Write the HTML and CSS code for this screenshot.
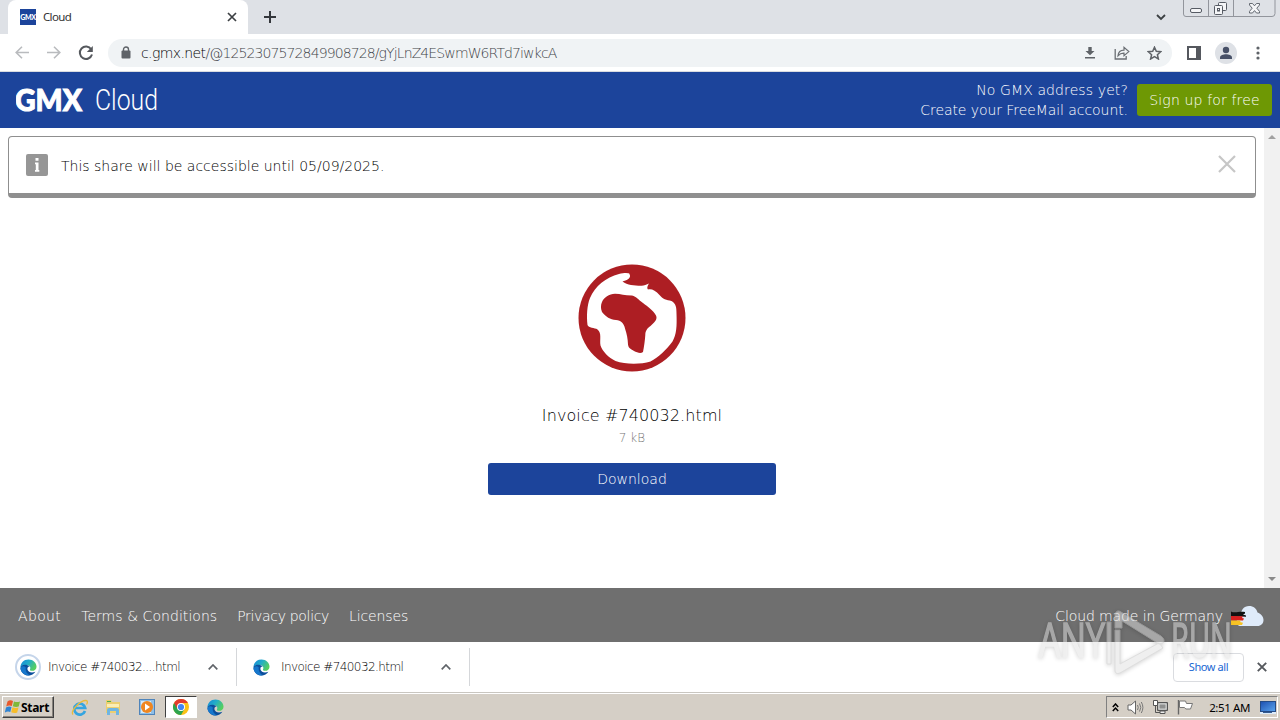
FILE: index.html
```html
<!DOCTYPE html>
<html lang="en">
<head>
<meta charset="utf-8">
<title>Cloud</title>
<link rel="stylesheet" href="styles.css">
</head>
<body>
<svg class="defs" width="0" height="0">
  <defs>
    <linearGradient id="edgeGreen" x1="0" y1="0" x2="1" y2="0.5">
      <stop offset="0" stop-color="#1687d8"/>
      <stop offset="0.5" stop-color="#22acc9"/>
      <stop offset="1" stop-color="#55cf60"/>
    </linearGradient>
    <linearGradient id="screenBlue" x1="0" y1="0" x2="1" y2="1">
      <stop offset="0" stop-color="#1c4fb0"/>
      <stop offset="1" stop-color="#5aa5ee"/>
    </linearGradient>
    <symbol id="edge" viewBox="0 0 18 18">
      <path d="M.5 9C.5 4 4 .5 9 .5c5 0 8.500 3.700 8.500 7.600 0 2.800-2.200 4.400-4.600 4.400-2 0-2.700-.8-2.300-1.500.9-1.600.1-4-2.600-4.300C5 6.300 2 6.500.5 9z" fill="url(#edgeGreen)"/>
      <path d="M.5 9.500C.4 7 4 5.200 8 6.500c1 .3 1.800.8 2.200 1.500-2 0-2.700 1.600-2.200 3.300.8 2.400 4 4 8.300 2.200C14.800 16 12 17.500 9 17.500 4.300 17.500.8 14 .5 9.500z" fill="#0b4f9c"/>
      <path d="M6.200 9c-.8 3 .8 6.600 4.500 8.300C6 18 1 14.500.5 10 2 7 4.500 7.500 6.200 9z" fill="#1677cc"/>
    </symbol>
  </defs>
</svg>

<div class="tabstrip">
  <div class="tab">
    <span class="favicon">GMX</span>
    <span class="tab-title">Cloud</span>
    <svg width="10" height="10" viewBox="0 0 10 10"><path d="M1 1l8 8M9 1L1 9" stroke="#3c4043" stroke-width="1.700"/></svg>
  </div>
  <svg class="newtab" width="12" height="12" viewBox="0 0 12 12"><path d="M6 0v12M0 6h12" stroke="#34373c" stroke-width="2"/></svg>
  <svg class="tabsearch" width="10" height="7" viewBox="0 0 10 7"><path d="M1 1l4 4 4-4" fill="none" stroke="#3c4043" stroke-width="1.800"/></svg>
  <svg class="winbtns" width="94" height="18" viewBox="0 0 94 18">
    <path d="M.5 0v14q0 2.500 2.500 2.500h86q3 0 3-3V0M25.500 0v16.500M50.500 0v16.500" fill="none" stroke="#92959c"/>
    <g fill="#f4f5f7" stroke="#565b64">
      <rect x="7.500" y="8.500" width="11" height="4" rx="1.500"/>
      <rect x="35.500" y="2.500" width="8" height="8" rx="1"/>
      <rect x="31.500" y="5.500" width="8" height="9" rx="1"/>
      <rect x="34.500" y="8.500" width="2" height="2.500"/>
      <path d="M66.500 3.500h3l2 2.300 2-2.300h3v1.500l-2.700 3.200 2.700 3.200v1.600h-3l-2-2.400-2 2.400h-3v-1.600l2.700-3.200-2.700-3.200z" stroke-width=".9"/>
    </g>
  </svg>
</div>

<div class="toolbar">
  <svg class="nav" width="14" height="13" viewBox="0 0 14 13"><path d="M7 .8L1.200 6.500 7 12.200M1.200 6.500H14" fill="none" stroke="#b9bbbe" stroke-width="1.600"/></svg>
  <svg class="nav" width="14" height="13" viewBox="0 0 14 13"><path d="M7 .8l5.800 5.700L7 12.200M12.800 6.500H0" fill="none" stroke="#b9bbbe" stroke-width="1.600"/></svg>
  <svg class="nav" width="16" height="16" viewBox="0 0 16 16"><path d="M13.200 4.200A6.200 6.200 0 1 0 14 9.500" fill="none" stroke="#55585d" stroke-width="2"/><path d="M14.800 1v6H8.800z" fill="#55585d"/></svg>
  <div class="omnibox">
    <svg width="10" height="13" viewBox="0 0 10 13"><path d="M2.500 6V3.500a2.500 2.500 0 0 1 5 0V6" fill="none" stroke="#5f6368" stroke-width="1.400"/><rect x="0.500" y="4.500" width="9" height="8" rx="1" fill="#5f6368"/></svg>
    <span class="url"><b>c.gmx.net</b>/@1252307572849908728/gYjLnZ4ESwmW6RTd7iwkcA</span>
    <svg width="10" height="12" viewBox="0 0 10 12"><path d="M3.300 0h3.400v4h2.800L5 8.300.5 4h2.800zM0 10h10v1.600H0z" fill="#5f6368"/></svg>
    <svg width="16" height="14" viewBox="0 0 16 14"><path d="M1.200 3v10h11v-3" fill="none" stroke="#6b6f74" stroke-width="1.300"/><path d="M4 9.800c.3-3.600 2.400-5.500 6-5.600V1.400l4.800 4.200L10 9.700V7.200C7.500 7.100 5.600 8 4 9.800z" fill="none" stroke="#6b6f74" stroke-width="1.200"/></svg>
    <svg width="15" height="14" viewBox="0 0 15 14"><path d="M7.500 1.200l1.800 4.100 4.400.4-3.300 3 1 4.300-3.900-2.300L3.600 13l1-4.300-3.300-3 4.400-.4z" fill="none" stroke="#5f6368" stroke-width="1.500"/></svg>
  </div>
  <svg class="panel" width="14" height="14" viewBox="0 0 14 14"><path d="M0 0h14v14H0zM2 2v10h7V2z" fill="#55585e" fill-rule="evenodd"/></svg>
  <svg class="avatar" width="22" height="22" viewBox="0 0 22 22"><circle cx="11" cy="11" r="11" fill="#dee1e6"/><circle cx="11" cy="8" r="3.200" fill="#475067"/><path d="M5 17v-1.500c0-2.200 3.500-3.300 6-3.300s6 1.100 6 3.300V17z" fill="#475067"/></svg>
  <svg class="dots" width="4" height="14" viewBox="0 0 4 14"><g fill="#5f6368"><circle cx="2" cy="2" r="1.600"/><circle cx="2" cy="7" r="1.600"/><circle cx="2" cy="12" r="1.600"/></g></svg>
</div>

<div class="header">
  <svg class="logo" width="150" height="48" viewBox="0 0 150 48">
    <text class="logo-gmx" x="-1" y="35" textLength="67" lengthAdjust="spacingAndGlyphs">GMX</text>
    <text class="logo-cloud" x="79" y="34" textLength="63" lengthAdjust="spacingAndGlyphs">Cloud</text>
  </svg>
  <p class="account"><span class="acc1">No GMX address yet?</span><br><span class="acc2">Create your FreeMail account.</span></p>
  <a class="signup">Sign up for free</a>
</div>

<div class="content">
  <div class="page">
    <div class="notice">
      <svg width="22" height="22" viewBox="0 0 22 22"><rect width="22" height="22" rx="2" fill="#969696"/><path d="M9.500 4h3v2.800h-3zM9 8.500h3.500V16h.8v1.800H9V16h.8v-5.800H9z" fill="#fff"/></svg>
      <span class="notice-text">This share will be accessible until 05/09/2025.</span>
      <svg class="notice-close" width="18" height="18" viewBox="0 0 18 18"><path d="M1 1l16 16M17 1L1 17" stroke="#c6c6c6" stroke-width="2.200"/></svg>
    </div>
    <div class="file">
      <svg width="108" height="108" viewBox="0 0 108 108">
        <circle cx="54" cy="54" r="53.500" fill="#ad1e23"/>
        <path d="M52 9.500c-2-.8-6-1-11 .5C28 13.500 17 22 12 34 9 41 8.500 52 9.500 61c1 3 7 2.500 10 4.500 4.500 3.500 2 10 3 16 2 6 8 12 15 15.500 10 3.500 25 3.500 35 .5 8-4 16-12 22-20 4-7 4.500-15 4-28 0-6-.5-10-5-12.500-5-1-9-2-12-6-4-5-8.500-6.500-11.500-5.500-1.500-1.500 0-4.500 1-6-2.500 1-5.500 2.500-8 2.200-7-.2-13.500-.2-18.500-4.200 4-1 8-3 7.500-6-.3-1.300-.8-2-1-2z" fill="#fff"/>
        <path d="M24 38c2-4.500 7-8 13-8.200 6 .2 10 1.800 17 1.700 4.500 1 6.500 4.500 11 7.500 5 4 10 7 13 12.500 2 4-2 7-5.500 10.500-4 3-5 5-5.200 9-.3 5-1.300 12-2.300 17-2.500 2-6 .5-9-1-3-2-5.500-2.500-6-6.500-.3-6-1-10-3-16-1-5-4-8-9-8.500-6-.5-10-3-14-8-1.500-4-1.300-7 0-10z" fill="#ad1e23"/>
      </svg>
      <div class="filename">Invoice #740032.html</div>
      <div class="filesize">7 kB</div>
      <a class="download">Download</a>
    </div>
  </div>
  <div class="scrollbar">
    <svg width="8" height="4" viewBox="0 0 8 4"><path d="M0 4l4-4 4 4z" fill="#a0a0a0"/></svg>
    <svg width="8" height="4" viewBox="0 0 8 4"><path d="M0 0l4 4 4-4z" fill="#8a8a8a"/></svg>
  </div>
</div>

<div class="footer">
  <a class="f1">About</a>
  <a class="f2">Terms &amp; Conditions</a>
  <a class="f3">Privacy policy</a>
  <a class="f4">Licenses</a>
  <span class="germany">Cloud made in Germany</span>
  <svg class="cloud" width="33" height="22" viewBox="0 0 33 22">
    <path d="M9 21c-3-.5-4-3-3-6 .5-2 2-3.500 4-4C9.500 5 13 1 18 1c4.500 0 7.500 2.500 8.500 6.500C30 9 32.500 11.500 32.500 15c0 3.500-2.500 6-6 6z" fill="#dfebfa"/>
    <path d="M0 6.500c4 2 8-.5 14 .5v1.500l-2 1 3 1v1.200L0 11z" fill="#111"/>
    <path d="M0 11l12 .3-1 1.700 2 .5-1 2H0z" fill="#d8201f"/>
    <path d="M0 15.500h10l-1 1.500 3 .8-1 2.200H0z" fill="#f7c325"/>
  </svg>
</div>

<div class="shelf">
  <div class="dl">
    <span class="ring"><svg width="17" height="17"><use href="#edge"/></svg></span>
    <span>Invoice #740032....html</span>
    <svg class="chev" width="10" height="6" viewBox="0 0 10 6"><path d="M.7 5.300L5 1l4.300 4.300" fill="none" stroke="#5f6368" stroke-width="1.700"/></svg>
  </div>
  <div class="dl">
    <span class="ring noring"><svg width="17" height="17"><use href="#edge"/></svg></span>
    <span>Invoice #740032.html</span>
    <svg class="chev" width="10" height="6" viewBox="0 0 10 6"><path d="M.7 5.300L5 1l4.300 4.300" fill="none" stroke="#5f6368" stroke-width="1.700"/></svg>
  </div>
  <a class="showall">Show all</a>
  <svg class="shelfclose" width="10" height="10" viewBox="0 0 10 10"><path d="M.8.8l8.400 8.400M9.200.8L.8 9.200" stroke="#55585d" stroke-width="1.900"/></svg>
</div>

<div class="taskbar">
  <div class="start">
    <svg width="16" height="16" viewBox="0 0 16 16">
      <path d="M2.500 2.500Q5 .5 8 2L6.800 7Q4 5.800 1.200 7.500z" fill="#e8592b"/>
      <path d="M9 2.400q3 1.200 6 0L13.700 7.500Q11 8.500 7.800 7.300z" fill="#7fb83a"/>
      <path d="M1 8.500q2.800-1.500 5.500-.5l-1.200 5Q2.500 12-.2 13.500z" fill="#2e83d2"/>
      <path d="M7.500 8.300q3 1.200 6 .2l-1.300 5q-3 1.200-6-.2z" fill="#f7bd2a"/>
    </svg>
    <b>Start</b>
  </div>
  <span class="task">
    <svg width="17" height="17" viewBox="0 0 17 17"><path d="M14 12A5.500 5.500 0 1 1 14.200 9H4" fill="none" stroke="#35a5e0" stroke-width="2.700"/><path d="M2 15.500C-1 12 9 1.500 15 1.500c2 0 1.500 2.500.5 4" fill="none" stroke="#e8bb3d" stroke-width="1.300"/></svg>
  </span>
  <span class="task">
    <svg width="16" height="16" viewBox="0 0 16 16"><path d="M1 1h5l1 2h8v11H1z" fill="#eccf70"/><path d="M2 2h4v1H2z" fill="#4caf50"/><path d="M2 5h12v3H2z" fill="#fbedb4"/><path d="M2 16v-5q0-2 2-2h8q2 0 2 2v5h-3v-4H5v4z" fill="#6fb5e2"/></svg>
  </span>
  <span class="task">
    <svg width="16" height="16" viewBox="0 0 16 16"><rect x=".5" y=".5" width="15" height="15" fill="#8ebfe8" stroke="#4f84ba"/><rect x="2" y="2" width="10" height="12" fill="#d5e9f8"/><circle cx="8" cy="8" r="6" fill="#ef8620"/><path d="M6 4.500l5 3.500-5 3.500z" fill="#fff"/></svg>
  </span>
  <span class="task active">
    <svg width="16" height="16" viewBox="0 0 16 16"><circle cx="8" cy="8" r="8" fill="#fbc116"/><path d="M1.070 4A8 8 0 0 0 8 16l3.500-6L8 8z" fill="#2da44e"/><path d="M8 4h6.930A8 8 0 0 0 1.070 4L4.500 10z" fill="#e33b2e"/><circle cx="8" cy="8" r="4" fill="#fff"/><circle cx="8" cy="8" r="3.100" fill="#4285f4"/></svg>
  </span>
  <span class="task"><svg width="17" height="17"><use href="#edge"/></svg></span>
  <div class="tray">
    <svg width="7" height="9" viewBox="0 0 7 9"><path d="M.8 4l2.700-3 2.700 3M.8 8l2.700-3 2.700 3" fill="none" stroke="#000" stroke-width="1.500"/></svg>
    <svg width="17" height="15" viewBox="0 0 17 15"><path d="M1 5h3l4.500-4v13L4 10H1z" fill="#fff" stroke="#666"/><path d="M10.500 5q1.500 2.500 0 5M12.500 3.500q2.500 4 0 8M14.300 2q3.200 5.500 0 11" fill="none" stroke="#777"/></svg>
    <svg width="17" height="16" viewBox="0 0 17 16"><path d="M5.500 3.500h10v8h-10z" fill="#a9aaa9" stroke="#555"/><path d="M7 5h7v5H7z" fill="#8f908f" stroke="#fff" stroke-width=".6"/><path d="M1.500 1.500h4v5h-4z" fill="#fff" stroke="#555"/><path d="M3.500 6.500v7h5" fill="none" stroke="#555"/><path d="M8 12h5v2.500H8z" fill="#eee" stroke="#555"/></svg>
    <svg width="17" height="16" viewBox="0 0 17 16"><path d="M1.500 1v14.500" stroke="#666" stroke-width="1.400"/><path d="M2.500 2h6l1 2.500h6L13.500 10H8.800L7.500 8.500h-5z" fill="#fff" stroke="#777"/></svg>
    <span class="clock">2:51 AM</span>
    <svg width="16" height="14" viewBox="0 0 16 14"><rect x=".5" y="1.500" width="15" height="10" fill="url(#screenBlue)" stroke="#244b86"/><path d="M0 12h16v2H0z" fill="#dcebfa"/><path d="M3 12h9v1H3z" fill="#345b91"/></svg>
  </div>
</div>

<svg class="watermark" width="210" height="76" viewBox="0 0 210 76">
  <text x="5" y="53" textLength="66" lengthAdjust="spacingAndGlyphs">ANY</text>
  <text x="137" y="53" textLength="61" lengthAdjust="spacingAndGlyphs">RUN</text>
  <path d="M73 18h4v42h-4zM81 10q2-5 6-2l40 24q5 4 2 7l-4 1-37-23v7h-7zM81 26h5v34l39-21 4 5-43 25q-5 2-5-3z"/>
</svg>
</body>
</html>
```
FILE: styles.css
```css
* {
  box-sizing: border-box;
}

body {
  margin: 0;
  width: 1280px;
  height: 720px;
  overflow: hidden;
  display: flex;
  flex-direction: column;
  background: #fff;
  color: #000;
  font-family: "DejaVu Sans", Verdana, sans-serif;
  font-weight: 200;
  font-size: 14px;
  white-space: nowrap;
}

svg {
  display: block;
  flex: none;
}

p {
  margin: 0;
}

.defs {
  position: absolute;
}

/* browser */
.tabstrip {
  height: 34px;
  flex: none;
  display: flex;
  align-items: center;
  background: #dee1e6;
}

.tab {
  width: 240px;
  height: 34px;
  margin-left: 8px;
  padding: 0 11px 0 12px;
  display: flex;
  align-items: center;
  background: #fff;
  border-radius: 8px 8px 0 0;
}

.favicon {
  width: 16px;
  height: 16px;
  background: #1c449b;
  color: #fff;
  font: 900 7px/16px Lato, sans-serif;
  letter-spacing: -0.3px;
  text-align: center;
}

.tab-title {
  flex: 1;
  margin-left: 7px;
  font: 400 11.5px/16px "Noto Sans", sans-serif;
  letter-spacing: -0.65px;
  color: #333;
}

.newtab {
  margin-left: 16px;
}

.tabsearch {
  margin-left: auto;
}

.winbtns {
  align-self: flex-start;
  margin-left: 17px;
  margin-right: 3px;
}

.toolbar {
  height: 38px;
  flex: none;
  display: flex;
  align-items: center;
  padding: 0 20px 0 15px;
  border-bottom: 1px solid #d9dce0;
}

.nav {
  margin-right: 18px;
}

.nav + .nav + .nav {
  margin-right: 14px;
  margin-left: -1px;
}

.omnibox {
  flex: 1;
  height: 28px;
  display: flex;
  align-items: center;
  padding: 0 10px 0 13px;
  border-radius: 14px;
  background: #f0f3f5;
}

.url {
  margin-left: 10px;
  margin-right: auto;
  color: #3f4348;
  letter-spacing: -0.89px;
}

.url b {
  font-weight: 200;
  color: #000;
  letter-spacing: -0.6px;
}

.url ~ svg {
  margin-left: 17px;
}

.url + svg {
  margin-right: 2px;
}

.panel {
  margin-left: 15px;
}

.avatar {
  margin-left: 14px;
}

.dots {
  margin-left: 19px;
}

/* cloud page */
.header {
  height: 56px;
  flex: none;
  display: flex;
  align-items: center;
  padding: 0 8px 0 16px;
  background: #1c449b;
  color: #fff;
}

.logo text {
  fill: #fff;
}

.logo .logo-gmx {
  font: 900 30px Lato, sans-serif;
  stroke: #fff;
  stroke-width: 1px;
}

.logo .logo-cloud {
  font: 300 29px Roboto, sans-serif;
}

.account {
  margin-left: auto;
  text-align: right;
  line-height: 20px;
}

.acc1 {
  letter-spacing: 0.11px;
}

.acc2 {
  letter-spacing: -0.07px;
}

.signup {
  width: 135px;
  height: 32px;
  margin-left: 9px;
  border-radius: 3px;
  background: #6e9804;
  text-align: center;
  line-height: 32px;
  letter-spacing: 0.15px;
}

.content {
  height: 460px;
  flex: none;
  display: flex;
}

.page {
  flex: 1;
  padding: 8px;
}

.notice {
  height: 62px;
  display: flex;
  align-items: center;
  padding: 0 19px 0 17px;
  border: 1px solid #8f8f8f;
  border-bottom-width: 5px;
  border-radius: 4px;
}

.notice-text {
  flex: 1;
  margin-left: 13px;
  padding-top: 2px;
}

.notice-close {
  margin-bottom: 2px;
}

.file {
  display: flex;
  flex-direction: column;
  align-items: center;
  padding-top: 66px;
}

.filename {
  margin-top: 32px;
  font-size: 16px;
  line-height: 24px;
  letter-spacing: 0.1px;
}

.filesize {
  margin-top: 1px;
  color: #777;
  font-size: 12px;
  line-height: 18px;
}

.download {
  width: 288px;
  height: 32px;
  margin-top: 16px;
  border-radius: 3px;
  background: #1c449b;
  color: #fff;
  text-align: center;
  line-height: 32px;
}

.scrollbar {
  width: 16px;
  display: flex;
  flex-direction: column;
  align-items: center;
  justify-content: space-between;
  padding: 7px 0;
  background: #f1f1f1;
}

.footer {
  height: 54px;
  flex: none;
  display: flex;
  align-items: center;
  gap: 20px;
  padding: 2px 16px 0 18px;
  background: #6f6f6f;
  color: #fff;
}

.f1 {
  letter-spacing: 0.35px;
}

.f2 {
  letter-spacing: 0.05px;
}

.f3 {
  letter-spacing: -0.32px;
}

.f4 {
  letter-spacing: -0.12px;
}

.germany {
  margin-left: auto;
  letter-spacing: -0.12px;
}

.cloud {
  margin-left: -12px;
}

/* downloads */
.shelf {
  height: 50px;
  flex: none;
  display: flex;
  align-items: center;
  padding-right: 13px;
  font-size: 12px;
  letter-spacing: -0.57px;
}

.dl {
  width: 237px;
  height: 38px;
  display: flex;
  align-items: center;
  padding: 0 18px 0 15px;
  border-right: 1px solid #d5d7da;
}

.dl + .dl {
  width: 233px;
  padding-left: 11px;
}

.dl span + svg {
  margin-left: auto;
}

.ring {
  width: 26px;
  height: 26px;
  display: flex;
  align-items: center;
  justify-content: center;
  margin-right: 7px;
  border: 2px solid #c5d5ea;
  border-radius: 50%;
}

.noring {
  border-color: transparent;
}

.showall {
  width: 71px;
  height: 29px;
  margin-left: auto;
  border: 1px solid #dadce0;
  border-radius: 4px;
  color: #1a67d2;
  font: 400 11px/26px "Noto Sans", sans-serif;
  letter-spacing: -0.4px;
  text-align: center;
}

.shelfclose {
  margin-left: 13px;
}

/* windows */
.taskbar {
  height: 28px;
  flex: none;
  display: flex;
  align-items: center;
  padding: 1px 2px 0;
  border-top: 1px solid #c9c6c0;
  box-shadow: inset 0 1px #fff;
  background: #d5cfc6;
}

.start {
  width: 52px;
  height: 22px;
  display: flex;
  align-items: center;
  padding-left: 2px;
  border: 1px solid;
  border-color: #fff #404040 #404040 #fff;
  box-shadow: inset -1px -1px #87837c;
  margin-right: 9px;
}

.start b {
  font: 700 12px "Noto Sans", sans-serif;
  letter-spacing: -0.3px;
}

.task {
  width: 32px;
  height: 22px;
  margin-right: 2px;
  display: flex;
  align-items: center;
  justify-content: center;
}

.active {
  background: #fff;
  border: 1px solid;
  border-color: #404040 #fff #fff #404040;
}

.tray {
  width: 172px;
  height: 22px;
  margin-left: auto;
  display: flex;
  align-items: center;
  justify-content: space-between;
  padding: 0 1px 0 5px;
  border: 1px solid;
  border-color: #808080 #fff #fff #808080;
}

.clock {
  margin: 0 2px 0 7px;
  font: 400 11.5px "Noto Sans", sans-serif;
  letter-spacing: -0.4px;
}

/* overlay mark */
.watermark {
  position: absolute;
  left: 1034px;
  top: 604px;
  overflow: visible;
  opacity: 0.5;
  filter: drop-shadow(0 1px 2px rgba(0, 0, 0, 0.35));
}

.watermark text {
  font: 400 48px "Open Sans", sans-serif;
  fill: #e0e0e0;
  stroke: #e0e0e0;
  stroke-width: 1.5px;
}

.watermark path {
  fill: #e0e0e0;
  stroke: #bdbdbd;
}
```
